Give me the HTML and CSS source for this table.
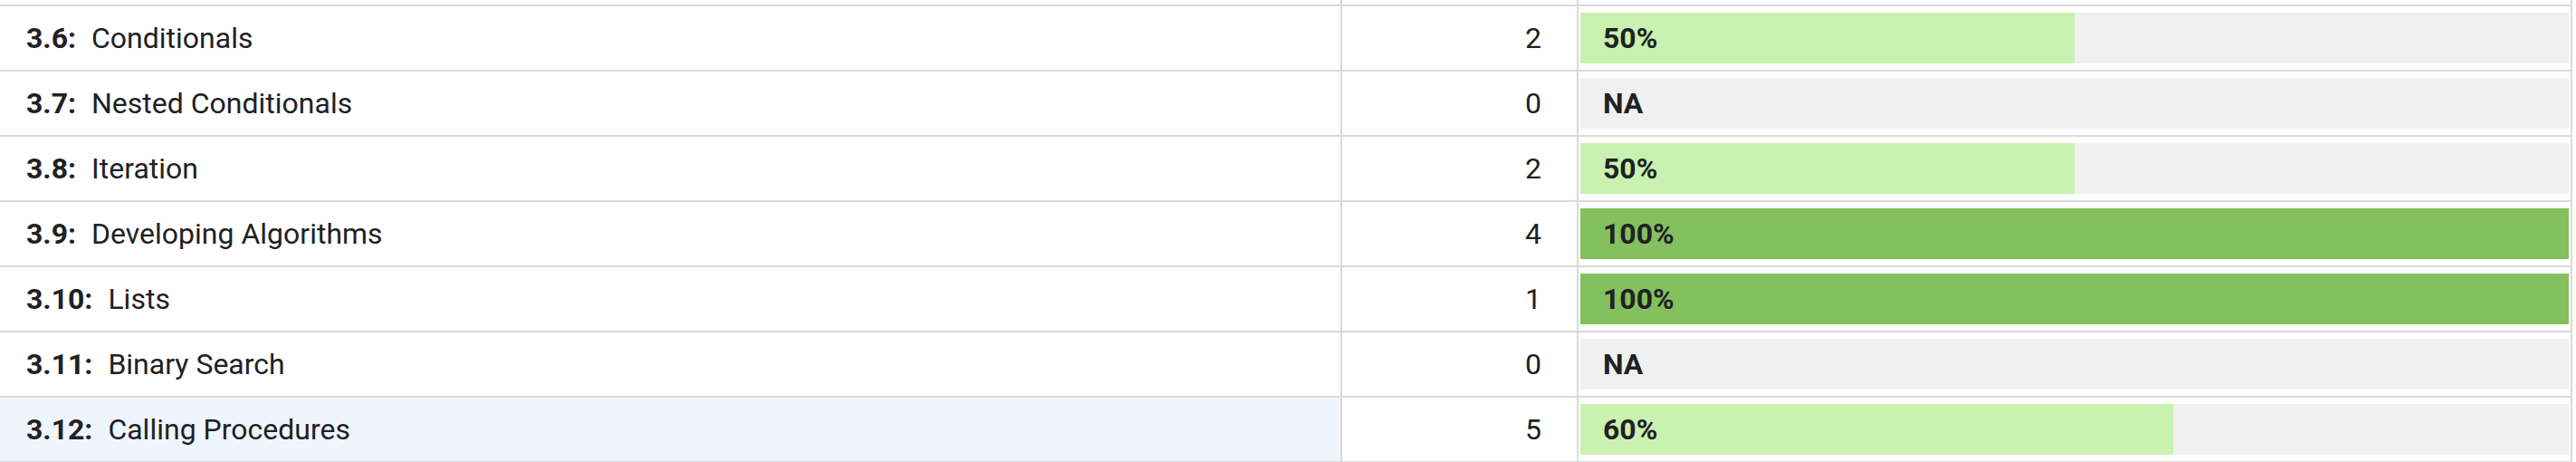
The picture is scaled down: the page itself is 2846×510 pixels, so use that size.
FILE: index.html
```html
<!DOCTYPE html>
<html lang="en">
<head>
  <meta charset="UTF-8">
  <meta name="viewport" content="width=device-width, initial-scale=1.0">
  <title>Topic progress</title>
  <link rel="stylesheet" href="styles.css">
</head>
<body>
  <div class="progress-table">
    <div class="cell stub"></div>
    <div class="cell stub"></div>
    <div class="cell stub"></div>

    <div class="cell topic"><span class="topic-num">3.6:</span>Conditionals</div>
    <div class="cell count">2</div>
    <div class="cell score"><div class="track"><div class="fill partial" style="--pct: 50%"></div><span class="label">50%</span></div></div>

    <div class="cell topic"><span class="topic-num">3.7:</span>Nested Conditionals</div>
    <div class="cell count">0</div>
    <div class="cell score"><div class="track"><span class="label">NA</span></div></div>

    <div class="cell topic"><span class="topic-num">3.8:</span>Iteration</div>
    <div class="cell count">2</div>
    <div class="cell score"><div class="track"><div class="fill partial" style="--pct: 50%"></div><span class="label">50%</span></div></div>

    <div class="cell topic"><span class="topic-num">3.9:</span>Developing Algorithms</div>
    <div class="cell count">4</div>
    <div class="cell score"><div class="track"><div class="fill full" style="--pct: 100%"></div><span class="label">100%</span></div></div>

    <div class="cell topic"><span class="topic-num">3.10:</span>Lists</div>
    <div class="cell count">1</div>
    <div class="cell score"><div class="track"><div class="fill full" style="--pct: 100%"></div><span class="label">100%</span></div></div>

    <div class="cell topic"><span class="topic-num">3.11:</span>Binary Search</div>
    <div class="cell count">0</div>
    <div class="cell score"><div class="track"><span class="label">NA</span></div></div>

    <div class="cell topic selected"><span class="topic-num">3.12:</span>Calling Procedures</div>
    <div class="cell count">5</div>
    <div class="cell score"><div class="track"><div class="fill partial" style="--pct: 60%"></div><span class="label">60%</span></div></div>
  </div>
</body>
</html>
```

FILE: styles.css
```css
body {
  margin: 0;
  background: #fff;
  font-family: Roboto, "Liberation Sans", sans-serif;
  color: #202124;
  overflow: hidden;
}
.progress-table {
  display: grid;
  grid-template-columns: 1483px 261px 1098px;
  grid-auto-rows: 72px;
  width: 2842px;
}
.cell {
  box-sizing: border-box;
  border-right: 2px solid #dadada;
  border-bottom: 2px solid #dadada;
  display: flex;
  align-items: center;
  font-size: 32px;
}
.stub {
  height: 7px;
}
.progress-table > .stub {
  grid-row: 1;
}
.progress-table {
  grid-template-rows: 7px;
}
.topic {
  padding-left: 29px;
}
.topic.selected {
  background: #eef5fd;
}
.topic-num {
  font-weight: 700;
  margin-right: 17px;
}
.count {
  justify-content: flex-end;
  padding-right: 39px;
}
.score {
  padding: 7px 2px;
  align-items: stretch;
}
.track {
  flex: 1;
  display: grid;
  background: #f0f0f0;
}
.fill {
  grid-area: 1 / 1;
  width: var(--pct);
}
.fill.partial {
  background: #c9f2b0;
}
.fill.full {
  background: #84c05e;
}
.label {
  grid-area: 1 / 1;
  align-self: center;
  padding-left: 25px;
  font-weight: 700;
  position: relative;
}
```
